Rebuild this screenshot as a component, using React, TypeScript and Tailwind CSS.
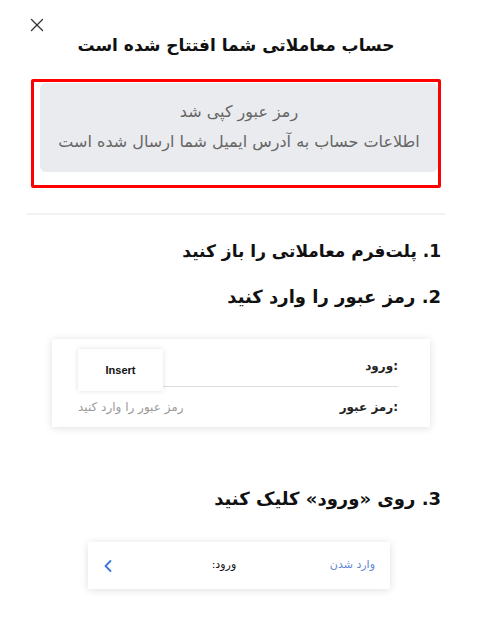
import { X, ChevronLeft } from "lucide-react";

const fa = "font-['DejaVu_Sans','Noto_Sans',sans-serif]";

export default function App() {
  return (
    <div className={`relative w-[487px] h-[621px] bg-white ${fa}`}>
      {/* close button */}
      <button className="absolute left-[26px] top-[14px] text-[#333]">
        <X className="w-[22px] h-[22px]" strokeWidth={1.4} />
      </button>

      <div className="ml-[31px] w-[410px] flex flex-col" dir="rtl">
        <h1 className="pt-[33px] h-[57px] text-center text-[17px] leading-[24px] font-bold text-[#111]">
          حساب معاملاتی شما افتتاح شده است
        </h1>

        {/* copied notice */}
        <div className="mt-[22px] h-[109px] border-[3px] border-[#ff0000] rounded-[2px] pt-[1px] pl-[6px] pb-[13px]">
          <div className="h-full bg-[#e9ebee] rounded-md pt-[14px] text-center text-[16px] leading-[30px] text-[#666]">
            <div>رمز عبور کپی شد</div>
            <div>اطلاعات حساب به آدرس ایمیل شما ارسال شده است</div>
          </div>
        </div>

        <div className="mt-[25px] -mx-[4px] h-[2px] bg-[#f2f2f2]" />

        <div className="mt-[22px] text-right text-[17px] leading-[28px] font-bold text-[#111]">
          1. پلت‌فرم معاملاتی را باز کنید
        </div>
        <div className="mt-[18px] text-right text-[18px] leading-[28px] font-bold text-[#111]">
          2. رمز عبور را وارد کنید
        </div>

        {/* login form sample */}
        <div className="mt-[28px] mr-[11px] ml-[21px] bg-white shadow-[0_1px_8px_rgba(0,0,0,0.13)] pt-[10px] pb-[10px] pr-[32px] pl-[26px]">
          <div className="flex items-start">
            <div className="flex-1 h-[38px] border-b border-[#dedede] pt-[7px] text-[12px] leading-[20px] font-bold text-[#222]">
              <span className="flex">
                <span>:</span>
                <span>ورود</span>
              </span>
            </div>
            <div className="w-[85px] h-[42px] flex items-center justify-center bg-white shadow-[0_0_5px_rgba(0,0,0,0.12)] text-[11px] font-bold text-[#111] font-['Liberation_Sans',sans-serif]">
              Insert
            </div>
          </div>
          <div className="mt-[6px] flex items-center justify-between h-[20px]">
            <span className="flex text-[12px] font-bold text-[#222]">
              <span>:</span>
              <span>رمز عبور</span>
            </span>
            <span className="text-[12px] text-[#9a9a9a]">رمز عبور را وارد کنید</span>
          </div>
        </div>

        <div className="mt-[58px] text-right text-[18px] leading-[28px] font-bold text-[#111]">
          3.  روی «ورود» کلیک کنید
        </div>

        {/* header sample */}
        <div className="mt-[29px] mr-[51px] ml-[57px] h-[47px] bg-white shadow-[0_1px_8px_rgba(0,0,0,0.13)] flex items-center justify-between pr-[15px] pl-[10px]">
          <span className="text-[11px] text-[#5f86d6]">وارد شدن</span>
          <span className="flex text-[11px] text-[#111]">
            <span>ورود</span>
            <span>:</span>
          </span>
          <ChevronLeft className="w-[20px] h-[20px] text-[#3c74e0]" strokeWidth={2.2} />
        </div>
      </div>
    </div>
  );
}
